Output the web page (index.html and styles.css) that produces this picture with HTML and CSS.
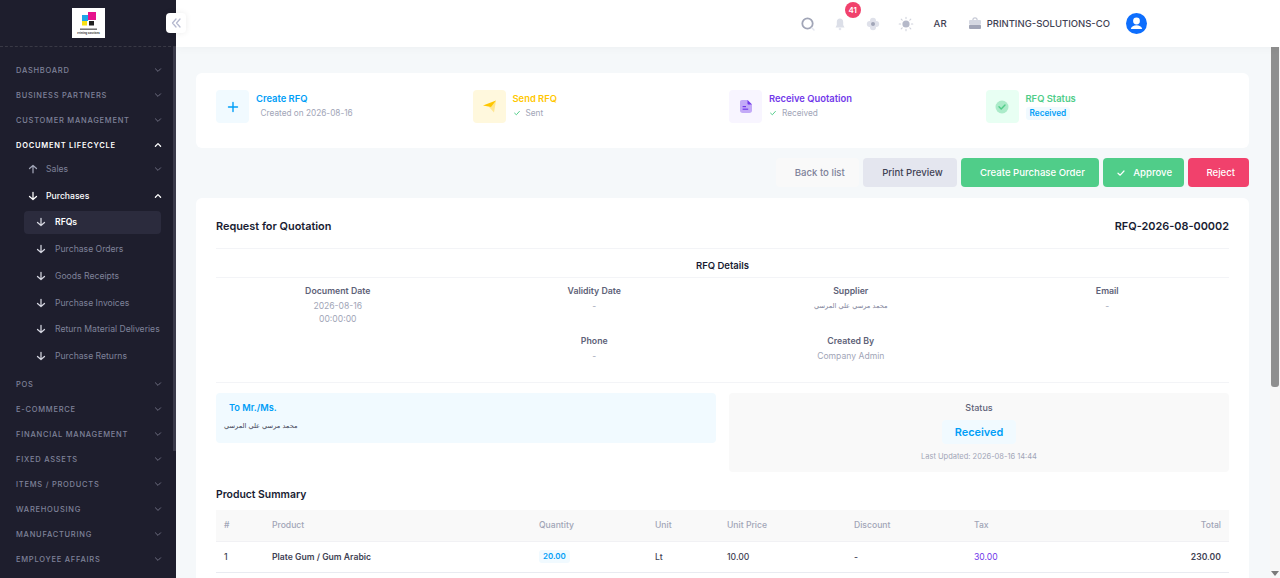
FILE: index.html
```html
<!DOCTYPE html>
<html lang="en">
<head>
  <meta charset="UTF-8">
  <meta name="viewport" content="width=device-width, initial-scale=1.0">
  <title>Request for Quotation</title>
  <link rel="stylesheet" href="styles.css">
</head>
<body>
  <svg class="sprites" width="0" height="0">
    <symbol id="chev-down" viewBox="0 0 10 10"><path d="M2.4 3.8 5 6.4 7.6 3.8" fill="none" stroke="currentColor" stroke-width="1" stroke-linecap="round" stroke-linejoin="round"/></symbol>
    <symbol id="chev-up" viewBox="0 0 10 10"><path d="M2.4 6.2 5 3.6 7.6 6.2" fill="none" stroke="currentColor" stroke-width="1.3" stroke-linecap="round" stroke-linejoin="round"/></symbol>
    <symbol id="arrow-down" viewBox="0 0 12 12"><path d="M6 1.5V9.5M1.8 6.5 6 10.2 10.2 6.5" fill="none" stroke="currentColor" stroke-width="1.5" stroke-linecap="round" stroke-linejoin="round"/></symbol>
    <symbol id="arrow-up" viewBox="0 0 12 12"><path d="M6 10.5V2.5M1.8 5.5 6 1.8 10.2 5.5" fill="none" stroke="currentColor" stroke-width="1.5" stroke-linecap="round" stroke-linejoin="round"/></symbol>
    <symbol id="check" viewBox="0 0 10 10"><path d="M2 5.2 4.2 7.2 8 3" fill="none" stroke="currentColor" stroke-width="1.2" stroke-linecap="round" stroke-linejoin="round"/></symbol>
  </svg>

  <div class="layout">
    <aside class="sidebar">
      <div class="sidebar-head">
        <div class="logo">
          <svg width="33" height="30" viewBox="0 0 33 30">
            <rect x="10" y="7" width="6" height="6" fill="#1fa5e8"/>
            <rect x="16" y="4" width="8" height="8" fill="#e6128c"/>
            <rect x="10" y="13" width="5" height="4.5" fill="#f7e214"/>
            <rect x="17" y="13" width="5" height="4.5" fill="#222"/>
            <rect x="8" y="20.5" width="17" height="1.4" fill="#666"/>
            <text x="16.5" y="25.5" text-anchor="middle" class="logo-text">Printing Solutions</text>
          </svg>
        </div>
        <button class="toggle">
          <svg width="12" height="12" viewBox="0 0 12 12"><path d="M6 2 2.5 6 6 10M10 2 6.5 6 10 10" fill="none" stroke="#b5b9cf" stroke-width="1.3" stroke-linecap="round" stroke-linejoin="round"/></svg>
        </button>
      </div>

      <div class="menu-wrap">
        <nav class="menu">
          <div class="menu-item"><span>Dashboard</span><svg class="chev"><use href="#chev-down"/></svg></div>
          <div class="menu-item"><span>Business Partners</span><svg class="chev"><use href="#chev-down"/></svg></div>
          <div class="menu-item"><span>Customer Management</span><svg class="chev"><use href="#chev-down"/></svg></div>
          <div class="menu-item open"><span>Document Lifecycle</span><svg class="chev"><use href="#chev-up"/></svg></div>

          <div class="submenu">
            <div class="sub-item"><svg class="arrow"><use href="#arrow-up"/></svg><span>Sales</span><svg class="chev"><use href="#chev-down"/></svg></div>
            <div class="sub-item open"><svg class="arrow"><use href="#arrow-down"/></svg><span>Purchases</span><svg class="chev"><use href="#chev-up"/></svg></div>
            <div class="sub-link active"><svg class="arrow"><use href="#arrow-down"/></svg><span>RFQs</span></div>
            <div class="sub-link"><svg class="arrow"><use href="#arrow-down"/></svg><span>Purchase Orders</span></div>
            <div class="sub-link"><svg class="arrow"><use href="#arrow-down"/></svg><span>Goods Receipts</span></div>
            <div class="sub-link"><svg class="arrow"><use href="#arrow-down"/></svg><span>Purchase Invoices</span></div>
            <div class="sub-link"><svg class="arrow"><use href="#arrow-down"/></svg><span>Return Material Deliveries</span></div>
            <div class="sub-link"><svg class="arrow"><use href="#arrow-down"/></svg><span>Purchase Returns</span></div>
          </div>

          <div class="menu-item"><span>POS</span><svg class="chev"><use href="#chev-down"/></svg></div>
          <div class="menu-item"><span>E-Commerce</span><svg class="chev"><use href="#chev-down"/></svg></div>
          <div class="menu-item"><span>Financial Management</span><svg class="chev"><use href="#chev-down"/></svg></div>
          <div class="menu-item"><span>Fixed Assets</span><svg class="chev"><use href="#chev-down"/></svg></div>
          <div class="menu-item"><span>Items / Products</span><svg class="chev"><use href="#chev-down"/></svg></div>
          <div class="menu-item"><span>Warehousing</span><svg class="chev"><use href="#chev-down"/></svg></div>
          <div class="menu-item"><span>Manufacturing</span><svg class="chev"><use href="#chev-down"/></svg></div>
          <div class="menu-item"><span>Employee Affairs</span><svg class="chev"><use href="#chev-down"/></svg></div>
        </nav>
        <div class="menu-thumb"></div>
      </div>
    </aside>

    <div class="main">
      <header class="topbar">
        <svg class="top-icon search" width="16" height="16" viewBox="0 0 16 16"><circle cx="7.5" cy="7.5" r="5.2" fill="none" stroke="#a1a5b7" stroke-width="1.8"/><path d="M12 12 14 14" stroke="#e4e6ef" stroke-width="1.4" stroke-linecap="round"/></svg>
        <div class="bell">
          <svg width="14" height="14" viewBox="0 0 14 14"><path d="M7 1.5C9 1.5 10.2 3 10.2 5V8L11.5 10.5H2.5L3.8 8V5C3.8 3 5 1.5 7 1.5Z" fill="#dcdfe8"/><circle cx="7" cy="12" r="1.3" fill="#e4e6ef"/></svg>
          <span class="badge">41</span>
        </div>
        <svg class="top-icon flower" width="14" height="14" viewBox="0 0 14 14"><g fill="#dfe1ea"><circle cx="7" cy="3.8" r="3"/><circle cx="7" cy="10.2" r="3"/><circle cx="3.8" cy="7" r="3"/><circle cx="10.2" cy="7" r="3"/></g><circle cx="7" cy="7" r="2" fill="#a1a5b7"/></svg>
        <svg class="top-icon sun" width="16" height="16" viewBox="0 0 16 16"><circle cx="8" cy="8" r="3.6" fill="#b5b9c9"/><path d="M8 1.2V2.6M8 13.4V14.8M1.2 8H2.6M13.4 8H14.8M3.2 3.2 4.2 4.2M11.8 11.8 12.8 12.8M3.2 12.8 4.2 11.8M11.8 4.2 12.8 3.2" stroke="#cfd2dc" stroke-width="1.1" stroke-linecap="round"/></svg>
        <span class="lang">AR</span>
        <svg class="top-icon case" width="14" height="13" viewBox="0 0 14 13"><path d="M5 3V2C5 1.4 5.4 1 6 1H8C8.6 1 9 1.4 9 2V3" fill="none" stroke="#b5b9c9" stroke-width="1"/><rect x="1" y="3" width="12" height="4.6" rx="1" fill="#d5d8e2"/><rect x="1" y="7.8" width="12" height="4.2" rx="1" fill="#a1a5b7"/></svg>
        <span class="company">PRINTING-SOLUTIONS-CO</span>
        <div class="avatar">
          <svg width="21" height="21" viewBox="0 0 21 21"><circle cx="10.5" cy="10.5" r="10.5" fill="#0d6efd"/><circle cx="10.5" cy="8" r="3.4" fill="#fff"/><path d="M4.8 16C5.4 13.4 7.6 12.2 10.5 12.2S15.6 13.4 16.2 16Z" fill="#fff"/></svg>
        </div>
      </header>

      <div class="content-wrap">
        <main class="content">
          <section class="card steps">
            <div class="step">
              <div class="step-icon blue">
                <svg width="12" height="12" viewBox="0 0 12 12"><path d="M6 1.5V10.5M1.5 6H10.5" stroke="#009ef7" stroke-width="1.4" stroke-linecap="round"/></svg>
              </div>
              <div>
                <div class="step-title blue-text">Create RFQ</div>
                <div class="step-sub indent">Created on 2026-08-16</div>
              </div>
            </div>
            <div class="step">
              <div class="step-icon yellow">
                <svg width="15" height="15" viewBox="0 0 15 15"><path d="M1 6.5 14 1.5 9 8Z" fill="#ffc700"/><path d="M7 8 14 1.5 12 13.5Z" fill="#ffc700" opacity=".35"/></svg>
              </div>
              <div>
                <div class="step-title yellow-text">Send RFQ</div>
                <div class="step-sub"><svg class="tick"><use href="#check"/></svg>Sent</div>
              </div>
            </div>
            <div class="step">
              <div class="step-icon purple">
                <svg width="14" height="15" viewBox="0 0 14 15"><path d="M3 1H8.5L13 5.5V11.5C13 13 12 14 10.5 14H3.5C2 14 1 13 1 11.5V3C1 1.8 1.8 1 3 1Z" fill="#7239ea" opacity=".4"/><path d="M8.5 1 13 5.5H9.5C8.9 5.5 8.5 5.1 8.5 4.5Z" fill="#7239ea"/><rect x="3.6" y="7" width="3.4" height="1.2" fill="#7239ea"/><rect x="3.6" y="9.6" width="5.6" height="1.2" fill="#7239ea"/></svg>
              </div>
              <div>
                <div class="step-title purple-text">Receive Quotation</div>
                <div class="step-sub"><svg class="tick"><use href="#check"/></svg>Received</div>
              </div>
            </div>
            <div class="step">
              <div class="step-icon green">
                <svg width="14" height="14" viewBox="0 0 14 14"><circle cx="7" cy="7" r="6.5" fill="#50cd89" opacity=".4"/><path d="M4 6.8 6.2 9 10 5" fill="none" stroke="#50cd89" stroke-width="1.4" stroke-linecap="round" stroke-linejoin="round"/></svg>
              </div>
              <div>
                <div class="step-title green-text">RFQ Status</div>
                <span class="pill step-pill">Received</span>
              </div>
            </div>
          </section>

          <div class="actions">
            <button class="btn btn-light">Back to list</button>
            <button class="btn btn-secondary">Print Preview</button>
            <button class="btn btn-success">Create Purchase Order</button>
            <button class="btn btn-success btn-approve"><svg class="btn-tick"><use href="#check"/></svg>Approve</button>
            <button class="btn btn-danger">Reject</button>
          </div>

          <section class="card doc">
            <div class="doc-head">
              <h2>Request for Quotation</h2>
              <div class="doc-no">RFQ-2026-08-00002</div>
            </div>
            <div class="doc-band">RFQ Details</div>

            <div class="details">
              <div class="detail"><div class="detail-label">Document Date</div><div class="detail-value">2026-08-16<br>00:00:00</div></div>
              <div class="detail"><div class="detail-label">Validity Date</div><div class="detail-value">-</div></div>
              <div class="detail"><div class="detail-label">Supplier</div><div class="detail-value arabic" dir="rtl">محمد مرسي علي المرسي</div></div>
              <div class="detail"><div class="detail-label">Email</div><div class="detail-value">-</div></div>
              <div class="detail"></div>
              <div class="detail"><div class="detail-label">Phone</div><div class="detail-value">-</div></div>
              <div class="detail"><div class="detail-label">Created By</div><div class="detail-value">Company Admin</div></div>
              <div class="detail"></div>
            </div>

            <div class="boxes">
              <div class="to-box">
                <div class="to-title">To Mr./Ms.</div>
                <div class="to-name arabic" dir="rtl">محمد مرسي علي المرسي</div>
              </div>
              <div class="status-box">
                <div class="status-label">Status</div>
                <div class="status-value">Received</div>
                <div class="status-date">Last Updated: 2026-08-16 14:44</div>
              </div>
            </div>

            <h3>Product Summary</h3>
            <table class="products">
              <colgroup>
                <col class="c-num"><col class="c-product"><col class="c-qty"><col class="c-unit"><col class="c-price"><col class="c-disc"><col class="c-tax"><col>
              </colgroup>
              <thead>
                <tr><th>#</th><th>Product</th><th>Quantity</th><th>Unit</th><th>Unit Price</th><th>Discount</th><th>Tax</th><th class="right">Total</th></tr>
              </thead>
              <tbody>
                <tr>
                  <td class="strong">1</td>
                  <td class="strong">Plate Gum / Gum Arabic</td>
                  <td><span class="pill">20.00</span></td>
                  <td class="strong">Lt</td>
                  <td class="strong">10.00</td>
                  <td class="strong">-</td>
                  <td class="tax">30.00</td>
                  <td class="right total">230.00</td>
                </tr>
              </tbody>
            </table>
          </section>
        </main>
        <div class="page-scrollbar">
          <div class="page-thumb"></div>
          <div class="page-arrow"></div>
        </div>
      </div>
    </div>
  </div>
</body>
</html>
```

FILE: styles.css
```css
* {
  box-sizing: border-box;
}

html, body {
  height: 100%;
  margin: 0;
  overflow: hidden;
}

body {
  font-family: Inter, "Liberation Sans", sans-serif;
  font-size: 9.6px;
  color: #3f4254;
  background: #f5f8fa;
}

.sprites {
  position: absolute;
}

.layout {
  display: flex;
  height: 100%;
}

/* sidebar */
.sidebar {
  position: relative;
  z-index: 3;
  width: 176px;
  flex-shrink: 0;
  display: flex;
  flex-direction: column;
  background: #1e1e2d;
}

.sidebar-head {
  position: relative;
  height: 47px;
  flex-shrink: 0;
  display: flex;
  justify-content: center;
  padding-top: 8px;
  border-bottom: 1px dashed #393945;
}

.logo {
  width: 33px;
  height: 30px;
  background: #fff;
}

.logo-text {
  font-size: 2.6px;
  font-weight: 700;
  fill: #333;
}

.toggle {
  position: absolute;
  top: 13px;
  left: 166px;
  width: 20px;
  height: 20px;
  padding: 0;
  display: flex;
  align-items: center;
  justify-content: center;
  border: none;
  border-radius: 4px;
  background: #fff;
  box-shadow: 0 0 6px rgba(0,0,0,0.08);
}

.menu-wrap {
  position: relative;
  flex: 1;
  min-height: 0;
}

.menu {
  height: 100%;
  overflow: hidden;
  padding-top: 10.5px;
}

.menu-thumb {
  position: absolute;
  top: 0;
  right: 0;
  width: 3px;
  height: 404px;
  background: #3a3a4a;
}

.menu-item {
  height: 25px;
  display: flex;
  align-items: center;
  justify-content: space-between;
  padding: 0 13px 0 16px;
  font-size: 7.5px;
  font-weight: 500;
  letter-spacing: 0.75px;
  text-transform: uppercase;
  color: #7e8299;
}

.menu-item.open {
  font-weight: 600;
  color: #fff;
}

.chev {
  width: 10px;
  height: 10px;
  flex-shrink: 0;
  color: #6d6d80;
}

.open > .chev {
  color: #fff;
}

.submenu {
  display: flex;
  flex-direction: column;
  gap: 3.75px;
  margin: -0.25px 0 4px;
}

.sub-item, .sub-link {
  height: 23px;
  display: flex;
  align-items: center;
  font-size: 8.65px;
  color: #7e8299;
}

.sub-item {
  padding: 0 13px 0 28px;
}

.sub-item span {
  flex: 1;
  margin-left: 8px;
}

.sub-item.open {
  font-weight: 500;
  color: #fff;
}

.sub-link {
  margin: 0 15px 0 24px;
  padding-left: 12px;
  border-radius: 4px;
}

.sub-link span {
  margin-left: 9px;
  white-space: nowrap;
}

.sub-link.active {
  font-weight: 600;
  color: #fff;
  background: #2b2b3d;
}

.arrow {
  width: 10px;
  height: 10px;
  flex-shrink: 0;
  color: #fff;
}

.sub-item:first-child .arrow {
  color: #a1a5b7;
}

.sub-link .arrow {
  color: #d5d6e0;
}

/* main column */
.main {
  flex: 1;
  min-width: 0;
  display: flex;
  flex-direction: column;
}

.topbar {
  position: relative;
  z-index: 2;
  height: 47px;
  flex-shrink: 0;
  display: flex;
  align-items: center;
  justify-content: flex-end;
  padding-right: 133px;
  background: #fff;
  box-shadow: 0 2px 8px rgba(0,0,0,0.03);
}

.top-icon {
  flex-shrink: 0;
}

.bell {
  position: relative;
  display: flex;
  margin-left: 17px;
}

.badge {
  position: absolute;
  top: -15px;
  left: 12px;
  width: 16px;
  height: 16px;
  border-radius: 50%;
  background: #f1416c;
  color: #fff;
  font-size: 8px;
  font-weight: 600;
  line-height: 16px;
  text-align: center;
}

.flower {
  margin-left: 19px;
}

.sun {
  margin-left: 18px;
}

.lang {
  margin-left: 20px;
  font-weight: 500;
}

.case {
  margin-left: 21px;
}

.company {
  margin-left: 5px;
  font-size: 9.5px;
  font-weight: 500;
}

.avatar {
  display: flex;
  margin-left: 16px;
}

.content-wrap {
  position: relative;
  flex: 1;
  min-height: 0;
}

.content {
  height: 100%;
  overflow: hidden;
  padding: 26px 31px 0 20px;
}

.page-scrollbar {
  position: absolute;
  top: 0;
  right: 0;
  bottom: 0;
  width: 10px;
  background: #f7f7f7;
}

.page-thumb {
  width: 8px;
  height: 340px;
  margin-left: 1px;
  border-radius: 0 0 3px 3px;
  background: #8f8f8f;
}

.page-arrow {
  position: absolute;
  left: 1px;
  bottom: 2px;
  border-top: 5px solid #7a7a7a;
  border-left: 4px solid transparent;
  border-right: 4px solid transparent;
}

.card {
  background: #fff;
  border-radius: 6px;
}

/* progress steps */
.steps {
  display: grid;
  grid-template-columns: repeat(4, 256.5px);
  height: 75px;
  padding: 17px 0 0 20px;
}

.step {
  display: flex;
  gap: 7px;
}

.step-icon {
  width: 33px;
  height: 33px;
  flex-shrink: 0;
  display: flex;
  align-items: center;
  justify-content: center;
  border-radius: 4px;
}

.blue { background: #f1faff; }
.yellow { background: #fff8dd; }
.purple { background: #f8f5ff; }
.green { background: #e8fff3; }

.blue-text { color: #009ef7; }
.yellow-text { color: #ffc700; }
.purple-text { color: #7239ea; }
.green-text { color: #50cd89; }

.step-title {
  margin-top: 1.5px;
  font-size: 9.4px;
  font-weight: 600;
  line-height: 14px;
}

.step-sub {
  display: flex;
  align-items: center;
  margin-top: 1px;
  font-size: 8.25px;
  line-height: 13px;
  color: #a1a5b7;
}

.indent {
  padding-left: 4.5px;
}

.tick {
  width: 8px;
  height: 8px;
  margin-right: 5px;
  color: #50cd89;
}

.pill {
  display: inline-block;
  padding: 0 4px;
  border-radius: 3px;
  background: #f1faff;
  color: #009ef7;
  font-size: 8.25px;
  font-weight: 600;
  line-height: 13px;
}

.step-pill {
  display: block;
  width: fit-content;
  margin-top: 1px;
}

/* buttons */
.actions {
  display: flex;
  justify-content: flex-end;
  gap: 4.4px;
  margin: 10px 0 11px;
}

.btn {
  height: 29px;
  display: flex;
  align-items: center;
  padding: 0 14px 0 19px;
  border: none;
  border-radius: 4px;
  font-family: inherit;
  font-size: 9.6px;
  font-weight: 500;
}

.btn-light {
  background: #f9f9f9;
  color: #7e8299;
}

.btn-secondary {
  background: #e4e6ef;
  color: #3f4254;
}

.btn-success {
  background: #50cd89;
  color: #fff;
}

.btn-approve {
  padding: 0 12px 0 13px;
}

.btn-danger {
  padding-left: 18px;
  background: #f1416c;
  color: #fff;
}

.btn-tick {
  width: 10px;
  height: 10px;
  margin-right: 7px;
}

/* document card */
.doc {
  padding: 20px;
}

.doc-head {
  display: flex;
  justify-content: space-between;
  align-items: center;
  height: 16px;
  margin-bottom: 14px;
}

h2, .doc-no {
  margin: 0;
  font-size: 10.9px;
  font-weight: 600;
  color: #181c32;
}

.doc-band {
  height: 30px;
  padding-top: 9.5px;
  border-top: 1px solid #f3f4f7;
  border-bottom: 1px solid #f3f4f7;
  font-size: 9.5px;
  font-weight: 600;
  line-height: 13px;
  text-align: center;
  color: #181c32;
}

.details {
  display: grid;
  grid-template-columns: repeat(4, 256.5px);
  row-gap: 9px;
  margin: 0 -6.5px;
  padding: 6.5px 0 20.5px;
  position: relative;
  text-align: center;
}

.details::after {
  content: "";
  position: absolute;
  left: 6.5px;
  right: 6.5px;
  bottom: 0;
  border-bottom: 1px solid #f3f4f7;
}

.detail-label {
  margin-bottom: 2px;
  font-size: 8.75px;
  font-weight: 600;
  line-height: 13px;
  color: #5e6278;
}

.detail-value {
  font-size: 8.6px;
  line-height: 13px;
  color: #a1a5b7;
}

.arabic {
  font-family: "DejaVu Sans", sans-serif;
}

.detail-value.arabic {
  font-size: 6.6px;
  color: #7e8299;
}

.boxes {
  display: grid;
  grid-template-columns: 500px 500px;
  gap: 13px;
  align-items: start;
  margin-top: 10px;
}

.to-box {
  height: 50px;
  padding: 8px;
  border-radius: 4px;
  background: #f1faff;
}

.to-title {
  padding-left: 5px;
  font-size: 9.2px;
  font-weight: 600;
  line-height: 14px;
  color: #009ef7;
}

.to-name {
  width: fit-content;
  margin-top: 5px;
  font-size: 6.6px;
  line-height: 12px;
  white-space: nowrap;
  color: #3f4254;
}

.status-box {
  height: 79px;
  padding-top: 8px;
  border-radius: 4px;
  background: #f9f9f9;
  text-align: center;
}

.status-label {
  font-size: 9px;
  font-weight: 500;
  line-height: 14px;
  color: #5e6278;
}

.status-value {
  width: fit-content;
  margin: 5px auto 0;
  padding: 0 13px;
  border-radius: 4px;
  background: #f1faff;
  color: #009ef7;
  font-size: 10.9px;
  font-weight: 600;
  line-height: 24px;
}

.status-date {
  margin-top: 7px;
  font-size: 7.5px;
  line-height: 12px;
  color: #a1a5b7;
}

h3 {
  margin: 15px 0 7px;
  font-size: 10.4px;
  font-weight: 600;
  line-height: 16px;
  color: #181c32;
}

.products {
  width: 100%;
  table-layout: fixed;
  border-collapse: collapse;
  font-size: 8.65px;
}

.c-num { width: 48px; }
.c-product { width: 267px; }
.c-qty { width: 116px; }
.c-unit { width: 72px; }
.c-price { width: 127px; }
.c-disc { width: 120px; }
.c-tax { width: 120px; }

.products th {
  height: 31px;
  padding: 0 8px;
  background: #f9f9f9;
  border-bottom: 1px solid #f1f1f4;
  font-size: 8.6px;
  font-weight: 500;
  text-align: left;
  color: #a1a5b7;
}

.products td {
  height: 31px;
  padding: 0 8px;
  border-bottom: 1px solid #e9ebf1;
  color: #3f4254;
}

.products .pill {
  font-size: 7.9px;
}

.products .right {
  text-align: right;
}

.strong {
  font-weight: 500;
}

.products td:nth-child(2) {
  font-weight: 600;
}

.tax {
  color: #7239ea !important;
}

.total {
  font-weight: 600;
}
```
